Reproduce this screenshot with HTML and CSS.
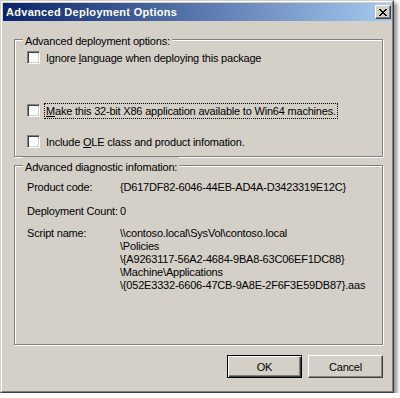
FILE: index.html
```html
<!DOCTYPE html>
<html lang="en">
<head>
    <meta charset="UTF-8">
    <title>Advanced Deployment Options</title>
    <link rel="stylesheet" href="styles.css">
</head>
<body>
    <div class="window">
        <div class="frame">
            <div class="titlebar">
                <span class="title">Advanced Deployment Options</span>
                <button class="close-btn" aria-label="Close">
                    <svg width="8" height="7" viewBox="0 0 8 7" shape-rendering="crispEdges">
                        <path fill="#000" d="M0 0h2v1h-2zM6 0h2v1h-2zM1 1h2v1h-2zM5 1h2v1h-2zM2 2h4v1h-4zM3 3h2v1h-2zM2 4h4v1h-4zM1 5h2v1h-2zM5 5h2v1h-2zM0 6h2v1h-2zM6 6h2v1h-2z"/>
                    </svg>
                </button>
            </div>

            <div class="content">
                <fieldset class="group group-options">
                    <legend>Advanced deployment options:</legend>
                    <div class="check-row row-1">
                        <span class="check"></span>
                        <span class="check-label">Ignore <u>l</u>anguage when deploying this package</span>
                    </div>
                    <div class="check-row row-2">
                        <span class="check"></span>
                        <span class="check-label focused"><u>M</u>ake this 32-bit X86 application available to Win64 machines.</span>
                    </div>
                    <div class="check-row row-3">
                        <span class="check"></span>
                        <span class="check-label">Include <u>O</u>LE class and product infomation.</span>
                    </div>
                </fieldset>

                <fieldset class="group group-diag">
                    <legend>Advanced diagnostic infomation:</legend>
                    <div class="info-row info-product">
                        <div class="info-label">Product code:</div>
                        <div class="info-value">{D617DF82-6046-44EB-AD4A-D3423319E12C}</div>
                    </div>
                    <div class="info-row info-count">
                        <div class="info-label">Deployment Count:</div>
                        <div class="info-value">0</div>
                    </div>
                    <div class="info-row info-script">
                        <div class="info-label">Script name:</div>
                        <div class="info-value">
                            <div>\\contoso.local\SysVol\contoso.local</div>
                            <div>\Policies</div>
                            <div>\{A9263117-56A2-4684-9BA8-63C06EF1DC88}</div>
                            <div>\Machine\Applications</div>
                            <div>\{052E3332-6606-47CB-9A8E-2F6F3E59DB87}.aas</div>
                        </div>
                    </div>
                </fieldset>

                <div class="buttons">
                    <button class="btn btn-default">OK</button>
                    <button class="btn">Cancel</button>
                </div>
            </div>
        </div>
    </div>
</body>
</html>
```

FILE: styles.css
```css
* {
    margin: 0;
    padding: 0;
    box-sizing: border-box;
}

body {
    font-family: 'Liberation Sans', Arial, sans-serif;
    font-size: 11px;
    line-height: 13px;
    letter-spacing: -0.2px;
    color: #000;
    background: #fff;
}

.window {
    width: 394px;
    height: 393px;
    background: #d4d0c8;
    border: 1px solid;
    border-color: #d4d0c8 #404040 #404040 #d4d0c8;
    box-shadow: 3px 3px 4px rgba(0,0,0,0.45);
}

.frame {
    height: 100%;
    border: 1px solid;
    border-color: #fff #808080 #808080 #fff;
    padding: 1px 0 1px 1px;
}

.titlebar {
    height: 18px;
    display: flex;
    align-items: flex-start;
    justify-content: space-between;
    padding: 0 1px 0 3px;
    background: linear-gradient(to right, #0a246a 0%, #a6caf0 100%);
}

.title {
    color: #fff;
    font-weight: bold;
    letter-spacing: 0.3px;
    line-height: 18px;
}

.close-btn {
    width: 16px;
    height: 14px;
    margin-top: 2px;
    display: flex;
    align-items: center;
    justify-content: center;
    background: #d4d0c8;
    border: 1px solid;
    border-color: #fff #404040 #404040 #fff;
    box-shadow: inset -1px -1px 0 #808080;
}

.close-btn svg {
    display: block;
    margin-left: -1px;
}

.content {
    padding: 0 9px 0 11px;
}

.group {
    width: 369px;
    border: 1px solid #808080;
    box-shadow: inset 1px 1px 0 #fff, 1px 1px 0 #fff;
    padding: 0 0 0 12px;
}

.group legend {
    margin-left: -4px;
    padding: 4px 2px 0;
    line-height: 13px;
    background: #d4d0c8;
}

.group-options {
    margin-top: 10px;
    padding-bottom: 6px;
}

.check-row {
    display: flex;
    align-items: flex-start;
    height: 16px;
}

.row-1 { margin-top: 2px; }
.row-2 { margin-top: 37px; }
.row-3 { margin-top: 15px; }

.check {
    width: 13px;
    height: 13px;
    margin-top: 1px;
    background: #fff;
    border: 1px solid;
    border-color: #808080 #fff #fff #808080;
    box-shadow: inset 1px 1px 0 #404040, inset -1px -1px 0 #d4d0c8;
}

.check-label {
    margin-left: 4px;
    padding: 0 1px;
    line-height: 14px;
    white-space: nowrap;
    border: 1px solid transparent;
}

.check-label.focused {
    border: 1px dotted #000;
}

.group-diag {
    padding-bottom: 52px;
}

.info-row {
    display: flex;
}

.info-label {
    width: 93px;
    white-space: nowrap;
}

.info-product { margin-top: 7px; }
.info-count { margin-top: 11px; }
.info-script { margin-top: 9px; }

.buttons {
    width: 369px;
    display: flex;
    justify-content: flex-end;
    gap: 6px;
    margin-top: 10px;
}

.btn {
    width: 75px;
    height: 23px;
    font-family: inherit;
    font-size: 11px;
    letter-spacing: inherit;
    color: #000;
    background: #d4d0c8;
    border: 1px solid;
    border-color: #fff #404040 #404040 #fff;
    box-shadow: inset -1px -1px 0 #808080;
}

.btn-default {
    border-color: #000;
    box-shadow: inset 1px 1px 0 #fff, inset -1px -1px 0 #404040, inset -2px -2px 0 #808080;
}
```
